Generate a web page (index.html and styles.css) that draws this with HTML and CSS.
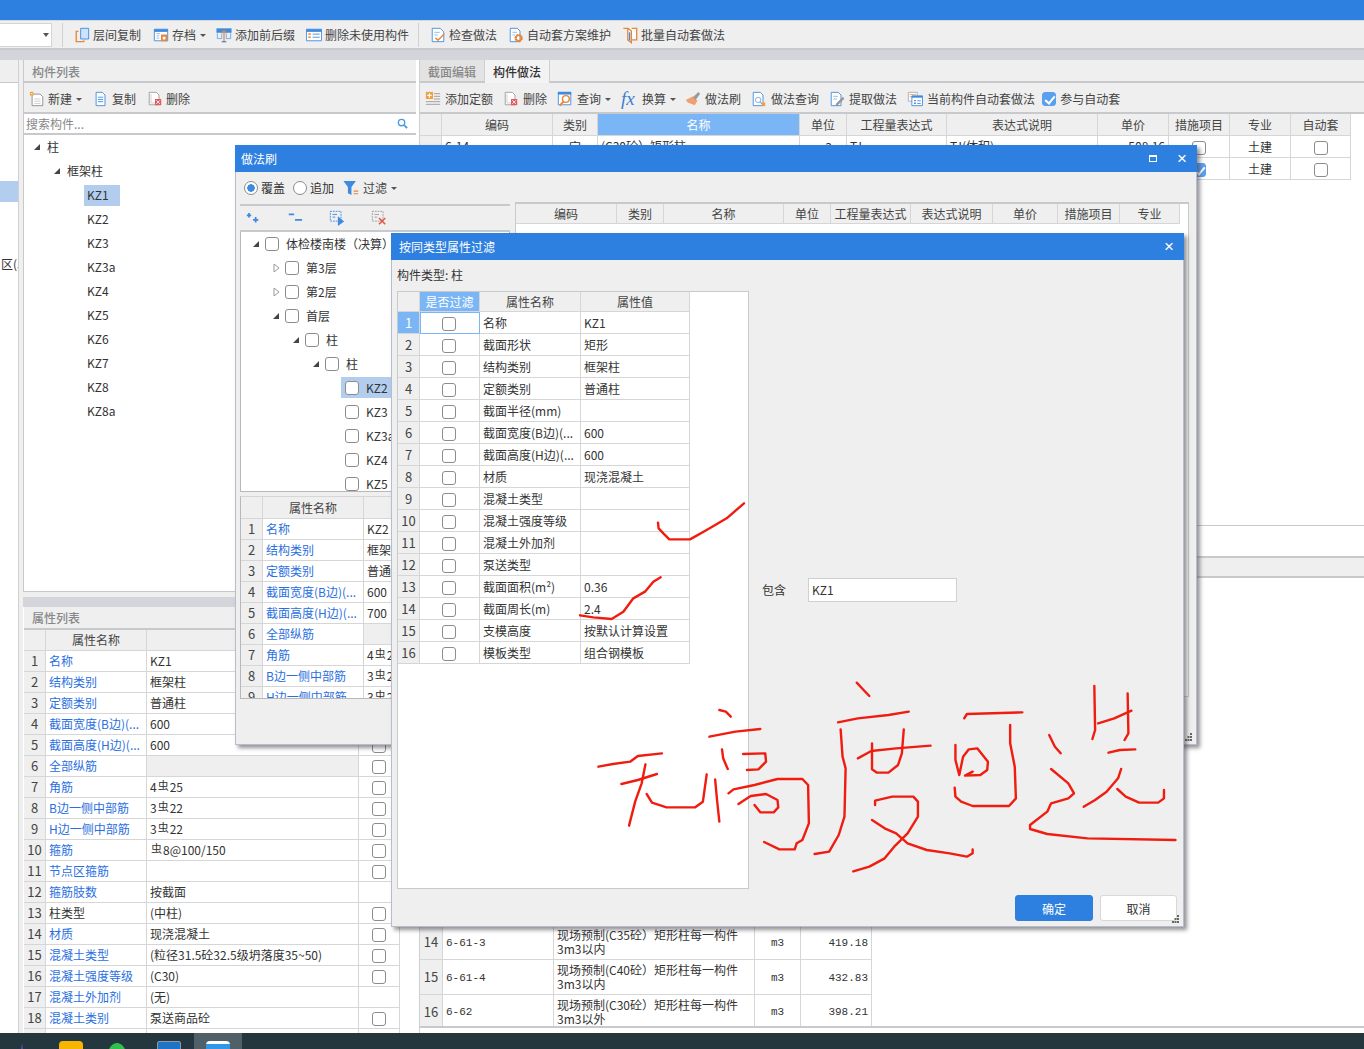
FILE: index.html
```html
<!DOCTYPE html>
<html lang="zh-CN">
<head>
<meta charset="utf-8">
<title>构件做法</title>
<link rel="stylesheet" href="styles.css">
</head>
<body>
<svg class="defs" width="0" height="0">
  <symbol id="i-floor" viewBox="0 0 18 18"><path d="M7.500 1.500h9v12h-9z" fill="#cfe3f8" stroke="#3d8ae0"/><path d="M5 5H2.500v11.500H11V15" fill="none" stroke="#e8863a" stroke-width="1.500"/></symbol>
  <symbol id="i-save" viewBox="0 0 18 18"><path d="M1.500 2.500h15v13h-15z" fill="#fff" stroke="#3d8ae0"/><path d="M1.500 2.500h15v3h-15z" fill="#3d8ae0"/><path d="M4 7.500h4M4 10h3M4 12.500h3" stroke="#8ab4e0"/><path d="M9 8.500h7v7.500H9z" fill="#e8863a"/><path d="M11 11h3v3h-3z" fill="#fff"/></symbol>
  <symbol id="i-fix" viewBox="0 0 18 18"><path d="M.5 1.500h17v5H.5z" fill="#3d8ae0"/><path d="M1.500 7v6h5V7M11.500 7v6h5V7" fill="none" stroke="#6aa5e5"/><path d="M6.500 4.500h5M9 4.500V16" stroke="#e8863a" stroke-width="1.400"/><path d="M6.500 16.500h5" stroke="#3d8ae0" stroke-width="1.500"/></symbol>
  <symbol id="i-table" viewBox="0 0 18 18"><path d="M.5 2.500h17v13H.5z" fill="#fff" stroke="#3d8ae0"/><path d="M.5 2.500h17v3H.5z" fill="#3d8ae0"/><path d="M2.500 7h3v2h-3zM2.500 10.500h3v2h-3z" fill="#f0a050"/><path d="M7.500 8h8M7.500 11.500h8" stroke="#3d8ae0"/></symbol>
  <symbol id="i-check" viewBox="0 0 18 18"><path d="M2.500 1.500h9l4 4v11h-13z" fill="#fff" stroke="#3d8ae0"/><path d="M5 6h6M5 9h4" stroke="#8ab4e0"/><path d="M6 12l3 3 7-7" fill="none" stroke="#e8863a" stroke-width="1.600"/></symbol>
  <symbol id="i-gear" viewBox="0 0 18 18"><path d="M2.500 1.500h8l3 3v12h-11z" fill="#fff" stroke="#3d8ae0"/><path d="M5 6h5M5 9h3" stroke="#8ab4e0"/><circle cx="12" cy="12.500" r="3.500" fill="none" stroke="#e8863a" stroke-width="2.400" stroke-dasharray="2 .7"/><circle cx="12" cy="12.500" r="3" fill="none" stroke="#e8863a" stroke-width="1.500"/></symbol>
  <symbol id="i-batch" viewBox="0 0 18 18"><path d="M1.500 1.500h5v13l4 3V4.500l-4-3M11 1.500h5.500v13H11" fill="#fff" stroke="#e8863a" stroke-width="1.500"/><path d="M8.500 6v9" stroke="#3d8ae0" stroke-width="1.500"/></symbol>
  <symbol id="i-new" viewBox="0 0 18 18"><path d="M3.500 3.500h9l3 3v10h-12z" fill="#fff" stroke="#888"/><path d="M6 9h7M6 11.500h7M6 14h7" stroke="#ccc"/><path d="M1 1h4v4H1z" fill="#f0a030"/><path d="M2 3h2" stroke="#fff"/></symbol>
  <symbol id="i-copy" viewBox="0 0 18 18"><path d="M3.500 1.500h7l3 3v12h-10z" fill="#fff" stroke="#3d8ae0"/><path d="M5.500 7h6M5.500 9.500h6M5.500 12h6" stroke="#3d8ae0"/></symbol>
  <symbol id="i-del" viewBox="0 0 18 18"><path d="M2.500 1.500h8l3 3v11h-11z" fill="#fff" stroke="#999"/><path d="M4.500 3.500v10h6" fill="none" stroke="#ccc"/><path d="M9 9h7v7H9z" fill="#e25a5a"/><path d="M10.500 10.500l4 4m0-4l-4 4" stroke="#fff"/></symbol>
  <symbol id="i-add" viewBox="0 0 18 18"><path d="M1 1h8v8H1z" fill="#f0a040"/><path d="M5 2.500v5M2.500 5h5" stroke="#fff" stroke-width="1.300"/><path d="M10 3h7M10 6h7M10 9h7M1 12h16M1 15h16" stroke="#999"/></symbol>
  <symbol id="i-query" viewBox="0 0 18 18"><path d="M1.500 1.500h14v14h-14z" fill="#fff" stroke="#3d8ae0"/><path d="M1 1h15v3H1z" fill="#3d8ae0"/><circle cx="10" cy="9" r="3.800" fill="#fff" stroke="#e8863a" stroke-width="1.600"/><path d="M7.200 12l-4 4.500" stroke="#e8863a" stroke-width="2.200"/></symbol>
  <symbol id="i-brush" viewBox="0 0 18 18"><path d="M9 6l5 5-3 5-8-3-2-3z" fill="#f0a070"/><path d="M9 7l6-6 2 2-5 7z" fill="#9a9a9a"/></symbol>
  <symbol id="i-look" viewBox="0 0 18 18"><path d="M2.500 1.500h8l3 3v12h-11z" fill="#fff" stroke="#3d8ae0"/><circle cx="8" cy="10" r="3" fill="#fff" stroke="#7aa6d8"/><path d="M10 12l2.500 2.500" stroke="#7aa6d8" stroke-width="1.400"/><path d="M12 13h4v4h-4z" fill="#f0a040"/></symbol>
  <symbol id="i-pick" viewBox="0 0 18 18"><path d="M2.500 1.500h8l3 3v12h-11z" fill="#fff" stroke="#3d8ae0"/><path d="M5 6h5M5 9h4" stroke="#8ab4e0"/><path d="M15.500 7l1.500 1.500-7 7-2 .5.500-2z" fill="#999" stroke="#777" stroke-width=".5"/></symbol>
  <symbol id="i-cur" viewBox="0 0 18 18"><path d="M1.500 1.500h10v10h-10z" fill="#fff" stroke="#aaa"/><path d="M3 4h7M3 6.500h3" stroke="#f0a060"/><path d="M5.500 5.500h12v11h-12z" fill="#fff" stroke="#3d8ae0"/><path d="M5.500 5.500h12v2h-12z" fill="#3d8ae0"/><path d="M8 10h2v1.500H8zM8 13h2v1.500H8z" fill="#3d8ae0"/><path d="M11.500 11h4M11.500 14h4" stroke="#3d8ae0"/></symbol>
  <symbol id="i-funnel" viewBox="0 0 18 18"><path d="M.5 1h14l-5 7v9l-4-2V8z" fill="#3d8ae0"/><path d="M12 12.500h5M12 15.500h5" stroke="#e8863a" stroke-width="1.300"/></symbol>
  <symbol id="i-plus" viewBox="0 0 18 18"><path d="M2 6h5M4.500 3.500v5M9 11h6M12 8v6" stroke="#3d8ae0" stroke-width="2"/></symbol>
  <symbol id="i-minus" viewBox="0 0 18 18"><path d="M2 5h6M9 11h8" stroke="#3d8ae0" stroke-width="2"/></symbol>
  <symbol id="i-sel" viewBox="0 0 18 18"><path d="M1.500 1.500h12v11h-12z" fill="none" stroke="#3d8ae0" stroke-dasharray="2 1"/><path d="M4 5h5M4 8h3" stroke="#3d8ae0"/><path d="M10 7l7 6-7 5z" fill="#3d8ae0"/></symbol>
  <symbol id="i-unsel" viewBox="0 0 18 18"><path d="M1.500 1.500h12v11h-12z" fill="none" stroke="#999" stroke-dasharray="2 1"/><path d="M4 5h5M4 8h3" stroke="#999"/><path d="M9 9l7 7m0-7l-7 7" stroke="#e05a40" stroke-width="1.800"/></symbol>
  <symbol id="i-open" viewBox="0 0 7 10"><path d="M1 1l5 4-5 4z" fill="#fff" stroke="#999"/></symbol>
  <symbol id="i-grip" viewBox="0 0 8 8"><path d="M5 0h2v2H5zM2.500 3H4.500v2h-2zM5 3h2v2H5zM0 6h2v2H0zM2.500 6h2v2h-2zM5 6h2v2H5z" fill="#666"/></symbol>
</svg>

<div class="app">
  <div class="titlebar"></div>
  <div class="toolbar">
    <div class="combo"><span class="caret"></span></div>
    <span class="vsep sep-a"></span>
    <div class="tb-item"><svg class="ic"><use href="#i-floor"/></svg>层间复制</div>
    <div class="tb-item"><svg class="ic"><use href="#i-save"/></svg>存档<span class="caret"></span></div>
    <div class="tb-item"><svg class="ic"><use href="#i-fix"/></svg>添加前后缀</div>
    <div class="tb-item"><svg class="ic"><use href="#i-table"/></svg>删除未使用构件</div>
    <span class="vsep"></span>
    <div class="tb-item"><svg class="ic"><use href="#i-check"/></svg>检查做法</div>
    <div class="tb-item"><svg class="ic"><use href="#i-gear"/></svg>自动套方案维护</div>
    <div class="tb-item"><svg class="ic"><use href="#i-batch"/></svg>批量自动套做法</div>
  </div>
  <div class="band"></div>
  <div class="workspace">
    <div class="strip">
      <div class="strip-head"></div>
      <div class="strip-sel"></div>
      <div class="strip-text">区(J</div>
    </div>
    <div class="gutter"></div>
    <div class="left">
      <section class="list-panel">
        <div class="panel-title">构件列表</div>
        <div class="panel-tools">
          <div class="tb-item"><svg class="ic"><use href="#i-new"/></svg>新建<span class="caret"></span></div>
          <div class="tb-item"><svg class="ic"><use href="#i-copy"/></svg>复制</div>
          <div class="tb-item"><svg class="ic"><use href="#i-del"/></svg>删除</div>
        </div>
        <div class="search"><span>搜索构件...</span><svg class="search-ic" viewBox="0 0 12 12"><circle cx="5" cy="5" r="3.500" fill="none" stroke="#4a9be0" stroke-width="1.500"/><path d="M8 8l3 3" stroke="#4a9be0" stroke-width="2"/></svg></div>
        <ul class="tree">
          <li class="node n0"><span class="arr"></span>柱</li>
          <li class="node n1"><span class="arr"></span>框架柱</li>
          <li class="node n2"><span class="leaf on">KZ1</span></li>
          <li class="node n2"><span class="leaf">KZ2</span></li>
          <li class="node n2"><span class="leaf">KZ3</span></li>
          <li class="node n2"><span class="leaf">KZ3a</span></li>
          <li class="node n2"><span class="leaf">KZ4</span></li>
          <li class="node n2"><span class="leaf">KZ5</span></li>
          <li class="node n2"><span class="leaf">KZ6</span></li>
          <li class="node n2"><span class="leaf">KZ7</span></li>
          <li class="node n2"><span class="leaf">KZ8</span></li>
          <li class="node n2"><span class="leaf">KZ8a</span></li>
        </ul>
      </section>
      <div class="mini-band"></div>
      <section class="prop-panel">
        <div class="panel-title">属性列表</div>
        <table class="grid prop">
          <tr><th class="c-n"></th><th class="c-name">属性名称</th><th class="c-val"></th><th class="c-chk"></th></tr>
          <tr><td class="num">1</td><td class="link">名称</td><td>KZ1</td><td class="mid"><i class="cb"></i></td></tr>
          <tr><td class="num">2</td><td class="link">结构类别</td><td>框架柱</td><td class="mid"><i class="cb"></i></td></tr>
          <tr><td class="num">3</td><td class="link">定额类别</td><td>普通柱</td><td class="mid"><i class="cb"></i></td></tr>
          <tr><td class="num">4</td><td class="link">截面宽度(B边)(...</td><td>600</td><td class="mid"><i class="cb"></i></td></tr>
          <tr><td class="num">5</td><td class="link">截面高度(H边)(...</td><td>600</td><td class="mid"><i class="cb"></i></td></tr>
          <tr><td class="num">6</td><td class="link">全部纵筋</td><td class="gray"></td><td class="mid"><i class="cb"></i></td></tr>
          <tr><td class="num">7</td><td class="link">角筋</td><td>4<span class="rebar">虫</span>25</td><td class="mid"><i class="cb"></i></td></tr>
          <tr><td class="num">8</td><td class="link">B边一侧中部筋</td><td>3<span class="rebar">虫</span>22</td><td class="mid"><i class="cb"></i></td></tr>
          <tr><td class="num">9</td><td class="link">H边一侧中部筋</td><td>3<span class="rebar">虫</span>22</td><td class="mid"><i class="cb"></i></td></tr>
          <tr><td class="num">10</td><td class="link">箍筋</td><td><span class="rebar">虫</span>8@100/150</td><td class="mid"><i class="cb"></i></td></tr>
          <tr><td class="num">11</td><td class="link">节点区箍筋</td><td></td><td class="mid"><i class="cb"></i></td></tr>
          <tr><td class="num">12</td><td class="link">箍筋肢数</td><td>按截面</td><td class="mid"></td></tr>
          <tr><td class="num">13</td><td>柱类型</td><td>(中柱)</td><td class="mid"><i class="cb"></i></td></tr>
          <tr><td class="num">14</td><td class="link">材质</td><td>现浇混凝土</td><td class="mid"><i class="cb"></i></td></tr>
          <tr><td class="num">15</td><td class="link">混凝土类型</td><td>(粒径31.5砼32.5级坍落度35~50)</td><td class="mid"><i class="cb"></i></td></tr>
          <tr><td class="num">16</td><td class="link">混凝土强度等级</td><td>(C30)</td><td class="mid"><i class="cb"></i></td></tr>
          <tr><td class="num">17</td><td class="link">混凝土外加剂</td><td>(无)</td><td class="mid"></td></tr>
          <tr><td class="num">18</td><td class="link">混凝土类别</td><td>泵送商品砼</td><td class="mid"><i class="cb"></i></td></tr>
          <tr><td class="num"></td><td></td><td></td><td class="mid"></td></tr>
        </table>
      </section>
    </div>
    <div class="gutter g2"></div>
    <div class="right">
      <div class="tabs"><span class="tab">截面编辑</span><span class="tab active">构件做法</span></div>
      <div class="panel-tools rt">
        <div class="tb-item"><svg class="ic"><use href="#i-add"/></svg>添加定额</div>
        <div class="tb-item"><svg class="ic"><use href="#i-del"/></svg>删除</div>
        <div class="tb-item"><svg class="ic"><use href="#i-query"/></svg>查询<span class="caret"></span></div>
        <div class="tb-item"><i class="fx">fx</i>换算<span class="caret"></span></div>
        <div class="tb-item tight"><svg class="ic"><use href="#i-brush"/></svg>做法刷</div>
        <div class="tb-item"><svg class="ic"><use href="#i-look"/></svg>做法查询</div>
        <div class="tb-item"><svg class="ic"><use href="#i-pick"/></svg>提取做法</div>
        <div class="tb-item"><svg class="ic"><use href="#i-cur"/></svg>当前构件自动套做法</div>
        <div class="tb-item tighter"><i class="cb checked"></i>参与自动套</div>
      </div>
      <div class="upper">
        <table class="grid method">
          <tr><th class="m0"></th><th class="m1">编码</th><th class="m2">类别</th><th class="m3 hot">名称</th><th class="m4">单位</th><th class="m5">工程量表达式</th><th class="m6">表达式说明</th><th class="m7">单价</th><th class="m8">措施项目</th><th class="m9">专业</th><th class="m10">自动套</th></tr>
          <tr><td class="num"><span class="arr inline"></span></td><td>6-14</td><td class="mid">定</td><td>(C30砼）矩形柱</td><td class="mid">m3</td><td>TJ</td><td>TJ(体积)</td><td class="end">508.16</td><td class="mid"><i class="cb"></i></td><td class="mid">土建</td><td class="mid"><i class="cb"></i></td></tr>
          <tr><td class="num"></td><td></td><td></td><td></td><td></td><td></td><td></td><td></td><td class="mid"><i class="cb checked"></i></td><td class="mid">土建</td><td class="mid"><i class="cb"></i></td></tr>
        </table>
        <div class="upper-foot"></div>
      </div>
      <div class="split-bar"></div>
      <div class="lower">
        <table class="grid quota">
          <tr class="tall"><td class="num q0">14</td><td class="mono q1">6-61-3</td><td class="q2">现场预制(C35砼）矩形柱每一构件<br>3m3以内</td><td class="mono mid q3">m3</td><td class="mono end q4">419.18</td></tr>
          <tr class="tall"><td class="num">15</td><td class="mono">6-61-4</td><td>现场预制(C40砼）矩形柱每一构件<br>3m3以内</td><td class="mono mid">m3</td><td class="mono end">432.83</td></tr>
          <tr class="tall last"><td class="num">16</td><td class="mono">6-62</td><td>现场预制(C30砼）矩形柱每一构件<br>3m3以外</td><td class="mono mid">m3</td><td class="mono end">398.21</td></tr>
        </table>
      </div>
    </div>
  </div>
  <div class="taskbar">
    <span class="app-ic purple"></span>
    <span class="app-ic yellow"></span>
    <span class="app-ic green"></span>
    <span class="app-ic blue"></span>
    <span class="app-active"><span class="app-ic mail"></span></span>
  </div>
</div>

<div class="dialog brush-dlg">
  <div class="dlg-title"><span>做法刷</span><span class="dlg-btns"><i class="max"></i><i class="close">×</i></span></div>
  <div class="brush-tools">
    <label class="opt"><i class="radio on"></i>覆盖</label>
    <label class="opt"><i class="radio"></i>追加</label>
    <div class="tb-item filter"><svg class="ic"><use href="#i-funnel"/></svg>过滤<span class="caret"></span></div>
  </div>
  <div class="brush-body">
    <div class="brush-left">
      <div class="mini-tools">
        <svg class="ic"><use href="#i-plus"/></svg>
        <svg class="ic"><use href="#i-minus"/></svg>
        <svg class="ic"><use href="#i-sel"/></svg>
        <svg class="ic"><use href="#i-unsel"/></svg>
      </div>
      <ul class="ctree">
        <li class="crow l0"><span class="arr"></span><i class="cb"></i>体检楼南楼（决算）</li>
        <li class="crow l1"><svg class="arr-open"><use href="#i-open"/></svg><i class="cb"></i>第3层</li>
        <li class="crow l1"><svg class="arr-open"><use href="#i-open"/></svg><i class="cb"></i>第2层</li>
        <li class="crow l1"><span class="arr"></span><i class="cb"></i>首层</li>
        <li class="crow l2"><span class="arr"></span><i class="cb"></i>柱</li>
        <li class="crow l3"><span class="arr"></span><i class="cb"></i>柱</li>
        <li class="crow l4 on"><i class="cb"></i>KZ2</li>
        <li class="crow l4"><i class="cb"></i>KZ3</li>
        <li class="crow l4"><i class="cb"></i>KZ3a</li>
        <li class="crow l4"><i class="cb"></i>KZ4</li>
        <li class="crow l4"><i class="cb"></i>KZ5</li>
      </ul>
      <div class="attr-wrap">
        <table class="grid attr">
          <tr><th class="c-n2"></th><th class="c-name2">属性名称</th><th class="c-val2"></th></tr>
          <tr><td class="num">1</td><td class="link">名称</td><td>KZ2</td></tr>
          <tr><td class="num">2</td><td class="link">结构类别</td><td>框架柱</td></tr>
          <tr><td class="num">3</td><td class="link">定额类别</td><td>普通柱</td></tr>
          <tr><td class="num">4</td><td class="link">截面宽度(B边)(...</td><td>600</td></tr>
          <tr><td class="num">5</td><td class="link">截面高度(H边)(...</td><td>700</td></tr>
          <tr><td class="num">6</td><td class="link">全部纵筋</td><td class="gray"></td></tr>
          <tr><td class="num">7</td><td class="link">角筋</td><td>4<span class="rebar">虫</span>25</td></tr>
          <tr><td class="num">8</td><td class="link">B边一侧中部筋</td><td>3<span class="rebar">虫</span>22</td></tr>
          <tr><td class="num">9</td><td class="link">H边一侧中部筋</td><td>3<span class="rebar">虫</span>22</td></tr>
        </table>
      </div>
    </div>
    <div class="brush-right">
      <table class="grid bm">
        <tr><th class="b1">编码</th><th class="b2">类别</th><th class="b3">名称</th><th class="b4">单位</th><th class="b5">工程量表达式</th><th class="b6">表达式说明</th><th class="b7">单价</th><th class="b8">措施项目</th><th class="b9">专业</th></tr>
      </table>
    </div>
  </div>
  <svg class="grip"><use href="#i-grip"/></svg>
</div>

<div class="dialog filter-dlg">
  <div class="dlg-title"><span>按同类型属性过滤</span><span class="dlg-btns"><i class="close">×</i></span></div>
  <div class="type-line">构件类型: 柱</div>
  <div class="filter-body">
    <div class="filter-box">
      <table class="grid flt">
        <tr><th class="f0"></th><th class="f1 hot">是否过滤</th><th class="f2">属性名称</th><th class="f3">属性值</th></tr>
        <tr><td class="num hot">1</td><td class="mid focus"><i class="cb"></i></td><td>名称</td><td>KZ1</td></tr>
        <tr><td class="num">2</td><td class="mid"><i class="cb"></i></td><td>截面形状</td><td>矩形</td></tr>
        <tr><td class="num">3</td><td class="mid"><i class="cb"></i></td><td>结构类别</td><td>框架柱</td></tr>
        <tr><td class="num">4</td><td class="mid"><i class="cb"></i></td><td>定额类别</td><td>普通柱</td></tr>
        <tr><td class="num">5</td><td class="mid"><i class="cb"></i></td><td>截面半径(mm)</td><td></td></tr>
        <tr><td class="num">6</td><td class="mid"><i class="cb"></i></td><td>截面宽度(B边)(...</td><td>600</td></tr>
        <tr><td class="num">7</td><td class="mid"><i class="cb"></i></td><td>截面高度(H边)(...</td><td>600</td></tr>
        <tr><td class="num">8</td><td class="mid"><i class="cb"></i></td><td>材质</td><td>现浇混凝土</td></tr>
        <tr><td class="num">9</td><td class="mid"><i class="cb"></i></td><td>混凝土类型</td><td></td></tr>
        <tr><td class="num">10</td><td class="mid"><i class="cb"></i></td><td>混凝土强度等级</td><td></td></tr>
        <tr><td class="num">11</td><td class="mid"><i class="cb"></i></td><td>混凝土外加剂</td><td></td></tr>
        <tr><td class="num">12</td><td class="mid"><i class="cb"></i></td><td>泵送类型</td><td></td></tr>
        <tr><td class="num">13</td><td class="mid"><i class="cb"></i></td><td>截面面积(m²)</td><td>0.36</td></tr>
        <tr><td class="num">14</td><td class="mid"><i class="cb"></i></td><td>截面周长(m)</td><td>2.4</td></tr>
        <tr><td class="num">15</td><td class="mid"><i class="cb"></i></td><td>支模高度</td><td>按默认计算设置</td></tr>
        <tr><td class="num">16</td><td class="mid"><i class="cb"></i></td><td>模板类型</td><td>组合钢模板</td></tr>
      </table>
    </div>
    <div class="contain"><span>包含</span><div class="contain-input">KZ1</div></div>
  </div>
  <div class="dlg-foot"><button class="btn primary">确定</button><button class="btn">取消</button></div>
  <svg class="grip"><use href="#i-grip"/></svg>
</div>

<svg class="ink ink-ticks" viewBox="0 0 1200 600">
  <path d="M804 128L806 145 820 160 838 178H900L950 150 1010 115 1062 70"/>
  <path d="M570 406L610 412 665 417 700 395 730 355 765 335 790 305 812 292"/>
</svg>
<svg class="ink ink-words" viewBox="0 0 1568 660" preserveAspectRatio="none">
  <path d="M22 290L60 282 105 275 125 258 188 250"/>
  <path d="M82 342L125 330 175 312"/>
  <path d="M145 283L135 340 118 395 102 467"/>
  <path d="M148 372L162 398 200 412H275L295 395 305 313"/>
  <path d="M338 120L355 125 368 140"/>
  <path d="M312 200L380 185 445 177"/>
  <path d="M345 238L348 265 360 297"/>
  <path d="M400 252L458 250 460 275 440 298 410 300"/>
  <path d="M327 328L332 390 338 455"/>
  <path d="M362 370L375 358 430 345 490 327H555L570 345 572 460 555 510 540 520 535 538H495L455 516"/>
  <path d="M388 402L420 378 460 372 490 390 492 412 480 427H445L430 405"/>
  <path d="M697 38L715 60 730 78"/>
  <path d="M648 157L700 145 780 135 833 125"/>
  <path d="M655 178L660 260 668 295 665 440 650 495 625 545 587 552"/>
  <path d="M700 265L735 243 800 235 890 227"/>
  <path d="M737 220V298L750 308H780L805 285 815 250 820 178"/>
  <path d="M745 405V392L790 380H845L857 395V440L830 490 795 530 770 565 730 590 688 604"/>
  <path d="M737 450L770 475 800 490 830 520 880 540 940 550 985 560 1000 550V538"/>
  <path d="M978 145L985 132 1130 127"/>
  <path d="M955 225V270L965 315 975 260 990 238 1012 235 1040 275 1038 300 1020 315 980 317 1000 305"/>
  <path d="M1098 165V220L1110 290 1113 385 1095 408H1000L970 395 955 380 953 353"/>
  <path d="M1318 48L1320 180 1313 207"/>
  <path d="M1405 70L1407 190 1397 210"/>
  <path d="M1328 160L1370 145 1415 122"/>
  <path d="M1355 248L1385 240 1425 238"/>
  <path d="M1388 297L1380 325 1350 365 1320 390 1290 410"/>
  <path d="M1378 357L1400 380 1435 398H1485L1500 385V360"/>
  <path d="M1200 195L1215 230 1230 250"/>
  <path d="M1205 297L1250 340 1265 370 1250 385 1205 400 1195 425 1150 465V477L1195 492 1300 505 1530 510"/>
</svg>
</body>
</html>
```
FILE: styles.css
```css
* { box-sizing: border-box; }
html, body { margin: 0; padding: 0; }
body {
  width: 1364px; height: 1049px; overflow: hidden; position: relative;
  background: #fff; color: #333;
  font: 12px/16px "Noto Sans CJK SC", "Noto Sans", sans-serif;
}
ul { list-style: none; margin: 0; padding: 0; }
.defs { position: absolute; }
.app { display: flex; flex-direction: column; height: 1049px; }

.titlebar { height: 20px; background: #2d7fe0; }
.toolbar {
  height: 30px; background: #efefef; border-top: 1px solid #d8d8d8; border-bottom: 2px solid #c8c9cc;
  display: flex; align-items: center; gap: 11px; color: #444; padding-top: 1px;
}
.combo {
  width: 52px; height: 24px; background: #fff; border: 1px solid #d4d4d4; border-left: 0; margin-top: -1px;
  display: flex; align-items: center; justify-content: flex-end; padding-right: 1px;
}
.vsep { width: 1px; height: 24px; background: #d0d0d0; margin: 0 0 0 -2px; }
.sep-a { margin: 0 0 0 -1px; }
.tb-item { display: flex; align-items: center; white-space: nowrap; color: #444; }
.toolbar .tb-item:nth-of-type(3) { margin-left: 1px; }
.toolbar .tb-item:nth-of-type(4) { margin-left: -1px; }
.ic { width: 16px; height: 18px; margin-right: 3px; flex: none; }
.caret {
  width: 0; height: 0; margin-left: 4px; margin-top: 1px;
  border: 3px solid transparent; border-top: 3px solid #555; border-bottom: 0;
}
.combo .caret { margin: 0 1px 0 0; border-width: 4px 3px 0; border-top-color: #555; }

.band { height: 10px; background: #d3d5da; }
.workspace { flex: 1; display: flex; min-height: 0; background: #efefef; }
.strip { width: 18px; background: #fff; overflow: hidden; flex: none; }
.strip-head { height: 23px; background: #efefef; border-bottom: 1px solid #c8c9cc; }
.strip-sel { height: 21px; background: #b3cdee; margin-top: 98px; }
.strip-text { margin-top: 53px; padding-left: 1px; white-space: nowrap; line-height: 18px; }
.gutter { width: 5px; background: #efefef; border-left: 1px solid #d0d0d0; flex: none; }
.g2 { width: 4px; border-left: 0; background: #fff; border-right: 1px solid #cfcfcf; }

.left { width: 393px; display: flex; flex-direction: column; flex: none; background: #fff; }
.list-panel { height: 532px; border: 1px solid #c8c9cc; border-top: 0; border-right: 0; display: flex; flex-direction: column; }
.panel-title {
  height: 23px; background: #efefef; border-bottom: 2px solid #c8c9cc;
  padding-left: 8px; color: #888; font-weight: 500; line-height: 24px; flex: none;
}
.panel-tools {
  height: 31px; background: #efefef; border-bottom: 2px solid #c8c9cc; flex: none;
  display: flex; align-items: center; padding-left: 5px; padding-top: 2px; gap: 11px;
}
.search {
  height: 21px; background: #fff; border-bottom: 2px solid #c8c9cc; flex: none;
  display: flex; align-items: center; justify-content: space-between; padding: 0 8px 0 2px; color: #888;
}
.search-ic { width: 11px; height: 11px; }
.node { height: 24px; display: flex; align-items: center; white-space: nowrap; color: #333; }
.n0 { padding-left: 10px; }
.n1 { padding-left: 30px; }
.n2 { padding-left: 60px; }
.arr {
  width: 6px; height: 6px; background: #444; clip-path: polygon(100% 0, 100% 100%, 0 100%);
  display: inline-block; margin-right: 7px; flex: none;
}
.arr.inline { margin: 0; }
.leaf { padding: 0 3px; height: 21px; min-width: 36px; line-height: 19px; }
.leaf.on { background: #b3cdee; }
.mini-band { height: 15px; background: #efefef; border-bottom: 10px solid #d3d5da; flex: none; }
.prop-panel { flex: 1; overflow: hidden; background: #fff; }
.prop-panel .panel-title { margin-left: 1px; width: 376px; line-height: 22px; }

.grid { border-collapse: separate; border-spacing: 0; table-layout: fixed; }
.grid th, .grid td {
  height: 21px; padding: 0 3px; border-right: 1px solid #d6d6d6; border-bottom: 1px solid #d6d6d6;
  white-space: nowrap; overflow: hidden; font-weight: 400; text-align: left; line-height: 16px;
}
.grid th { background: #efefef; text-align: center; color: #444; }
.grid .num { background: #efefef; text-align: center; color: #444; padding: 0; font-size: 13px; }
.grid .mid { text-align: center; padding: 0; }
.grid .end { text-align: right; }
.grid .link { color: #2a6fe0; }
.grid .gray { background: #efefef; }
.grid .hot { background: #7ab6f5; color: #fff; }
.grid .focus { outline: 1px solid #7ab6f5; outline-offset: -1px; }
.rebar { font-size: 11px; position: relative; top: -2px; margin: 0 1px; }
.cb {
  display: inline-block; width: 14px; height: 14px; background: #fff; border: 1px solid #8c8c8c;
  border-radius: 3px; vertical-align: middle; flex: none;
}
.cb.checked { border-color: #5aa0f0; position: relative; background: #5aa0f0; }
.cb.checked::after {
  content: ""; position: absolute; left: 4px; top: 1px; width: 4px; height: 8px;
  border: solid #fff; border-width: 0 2px 2px 0; transform: rotate(40deg);
}
.prop { width: 376px; margin-left: 1px; }
.c-n { width: 22px; } .c-name { width: 101px; } .c-val { width: 212px; } .c-chk { width: 41px; }

.right { flex: 1; display: flex; flex-direction: column; min-width: 0; background: #fff; }
.tabs { height: 23px; background: #efefef; border-bottom: 2px solid #c8c9cc; display: flex; flex: none; }
.tab { width: 65px; text-align: center; line-height: 24px; color: #888; font-weight: 500; background: #e3e3e3; border-right: 1px solid #d0d0d0; }
.tab.active { background: #f3f3f3; color: #333; height: 23px; }
.rt { padding-left: 5px; gap: 10px; }
.rt .tight { margin-left: -1px; }
.rt .tighter { margin-left: -3px; }
.rt .ic { margin-right: 4px; }
.fx { font: italic 19px/18px "Liberation Serif", serif; color: #3d7fd0; margin-right: 6px; width: 15px; }
.rt .cb { margin-right: 4px; }
.upper { height: 442px; display: flex; flex-direction: column; flex: none; }
.method { width: 931px; flex: none; }
.method th { height: 22px; }
.method td { height: 22px; padding-bottom: 1px; }
.m0 { width: 22px; } .m1 { width: 111px; } .m2 { width: 45px; } .m3 { width: 202px; } .m4 { width: 47px; }
.m5 { width: 100px; } .m6 { width: 151px; } .m7 { width: 71px; } .m8 { width: 61px; } .m9 { width: 61px; } .m10 { width: 60px; }
.upper-foot { margin-top: auto; height: 31px; border-top: 1px solid #c8c9cc; }
.split-bar { height: 22px; background: #efefef; border-top: 2px solid #c8c9cc; border-bottom: 2px solid #c8c9cc; flex: none; }
.lower { flex: 1; display: flex; flex-direction: column; justify-content: flex-end; padding-bottom: 5px; min-height: 0; overflow: hidden; position: relative; }
.quota { width: 452px; }
.lower::after { content: ""; position: absolute; left: 0; right: 0; bottom: 5px; height: 2px; background: #c8c9cc; }
.q0 { width: 23px; } .q1 { width: 111px; } .q2 { width: 201px; } .q3 { width: 46px; } .q4 { width: 71px; }
.grid .tall td { height: 35px; line-height: 14px; }
.grid .tall.last td { height: 33px; padding-top: 1px; }
.grid .mono { font: 11px/14px "Liberation Mono", monospace; color: #333; padding-top: 2px; }

.taskbar { height: 16px; background: #24373f; display: flex; padding-left: 18px; overflow: hidden; flex: none; }
.app-ic { display: block; margin-top: 8px; height: 24px; flex: none; }
.purple { width: 8px; margin-top: 10px; background: #5b4bb0; clip-path: polygon(50% 0, 100% 100%, 0 100%); }
.yellow { width: 24px; margin-left: 33px; background: #f7b500; border-radius: 4px; }
.green { width: 18px; margin-left: 25px; margin-top: 10px; background: #2fc14f; border-radius: 50%; }
.blue { width: 24px; margin-left: 31px; background: #1f72c4; border: 1px solid #8a9aa8; border-radius: 2px; }
.app-active { width: 48px; margin-left: 13px; background: #4f6068; display: flex; justify-content: center; }
.mail { width: 24px; background: linear-gradient(#fff 0 3px, #2f96e8 3px); border-radius: 4px; }

.dialog {
  position: absolute; background: #efefef; border: 1px solid #b7bdcb;
  box-shadow: 3px 3px 4px rgba(60, 60, 70, .55);
  display: flex; flex-direction: column;
}
.brush-dlg { left: 235px; top: 145px; width: 962px; height: 600px; }
.filter-dlg { left: 391px; top: 233px; width: 793px; height: 694px; }
.dlg-title {
  height: 27px; background: #2d7fe0; color: #fff; display: flex; justify-content: space-between;
  align-items: center; padding: 0 10px 0 6px; margin: -1px -1px 0; flex: none;
}
.filter-dlg .dlg-title { padding-left: 8px; }
.dlg-btns { display: flex; align-items: center; gap: 20px; }
.max { width: 8px; height: 7px; border: 1px solid #fff; border-top-width: 2px; display: block; }
.close { font: 400 17px/16px "Liberation Sans", sans-serif; font-style: normal; color: #fff; display: block; }
.brush-tools { height: 32px; display: flex; align-items: center; padding-left: 8px; gap: 8px; flex: none; }
.opt { display: flex; align-items: center; gap: 3px; color: #333; }
.radio { width: 14px; height: 14px; border: 1px solid #8c8c8c; border-radius: 50%; background: #fff; display: block; }
.radio.on { background: radial-gradient(circle, #3d8ae0 0 3.5px, #fff 4px); }
.filter { margin-left: 1px; }
.filter .ic { margin-right: 4px; }
.brush-body { flex: 1; display: flex; padding: 0 7px 0 4px; gap: 5px; min-height: 0; }
.brush-left { width: 270px; flex: none; display: flex; flex-direction: column; }
.mini-tools { height: 28px; border-top: 2px solid #c8c9cc; border-bottom: 2px solid #c8c9cc; display: flex; align-items: center; padding-left: 5px; gap: 26px; flex: none; }
.mini-tools .ic { margin: 0; }
.ctree { height: 260px; background: #fff; border: 1px solid #b8b8b8; border-top: 0; overflow: hidden; flex: none; }
.crow { height: 24px; display: flex; align-items: center; white-space: nowrap; color: #333; }
.crow .arr { margin-right: 6px; margin-left: 3px; }
.arr-open { width: 7px; height: 10px; margin-left: 3px; margin-right: 5px; flex: none; }
.crow .cb { margin-right: 7px; }
.l0 { padding-left: 9px; } .l1 { padding-left: 29px; } .l2 { padding-left: 49px; } .l3 { padding-left: 69px; } .l4 { padding-left: 104px; }
.crow.on { background: linear-gradient(#b3cdee, #b3cdee) 100px 1px / 100% 21px no-repeat; }
.attr-wrap { margin-top: 4px; height: 203px; overflow: hidden; border: 1px solid #b8b8b8; border-top: 1px solid #d6d6d6; background: #fff; flex: none; }
.attr { width: 200px; }
.c-n2 { width: 22px; } .c-name2 { width: 101px; } .c-val2 { width: 77px; }
.attr th { height: 22px; }
.brush-right { flex: 1; background: #fff; border: 1px solid #c8c9cc; border-top: 2px solid #c8c9cc; height: 495px; margin-top: -2px; }
.bm { width: 664px; }
.bm th { height: 20px; background: #efefef; }
.b1 { width: 101px; } .b2 { width: 47px; } .b3 { width: 120px; } .b4 { width: 47px; } .b5 { width: 80px; }
.b6 { width: 82px; } .b7 { width: 65px; } .b8 { width: 62px; } .b9 { width: 60px; }
.grip { position: absolute; right: 3px; bottom: 3px; width: 8px; height: 8px; }

.type-line { height: 31px; line-height: 30px; padding-left: 5px; color: #333; flex: none; }
.filter-body { display: flex; align-items: center; padding-left: 5px; flex: none; }
.filter-box { width: 352px; height: 598px; background: #fff; border: 1px solid #c8c9cc; flex: none; }
.flt { width: 292px; }
.f0 { width: 22px; } .f1 { width: 60px; } .f2 { width: 101px; } .f3 { width: 109px; }
.flt th, .flt td { height: 22px; }
.flt th { height: 20px; }
.flt .mid { padding-right: 1px; }
.contain { display: flex; align-items: center; margin-left: 13px; }
.contain span { width: 46px; color: #333; }
.contain-input { width: 149px; height: 24px; background: #fff; border: 1px solid #d0d0d0; padding: 0 3px; line-height: 22px; color: #333; }
.dlg-foot { flex: 1; display: flex; justify-content: flex-end; align-items: flex-start; padding: 6px 6px 0 0; gap: 7px; }
.btn {
  width: 77px; height: 26px; font: inherit; line-height: 16px; padding: 1px 0 0; background: #fff; color: #333;
  border: 1px solid #d8d8d8; border-radius: 3px;
}
.btn.primary { width: 78px; background: #2d7fe0; border-color: #2d7fe0; color: #fff; }

.ink { position: absolute; fill: none; stroke: #f01c10; stroke-width: 2.4; stroke-linejoin: round; stroke-linecap: round; }
.ink path { vector-effect: non-scaling-stroke; }
.ink-ticks { left: 390px; top: 480px; width: 400px; height: 200px; }
.ink-words { left: 590px; top: 670px; width: 600px; height: 220px; }
```
